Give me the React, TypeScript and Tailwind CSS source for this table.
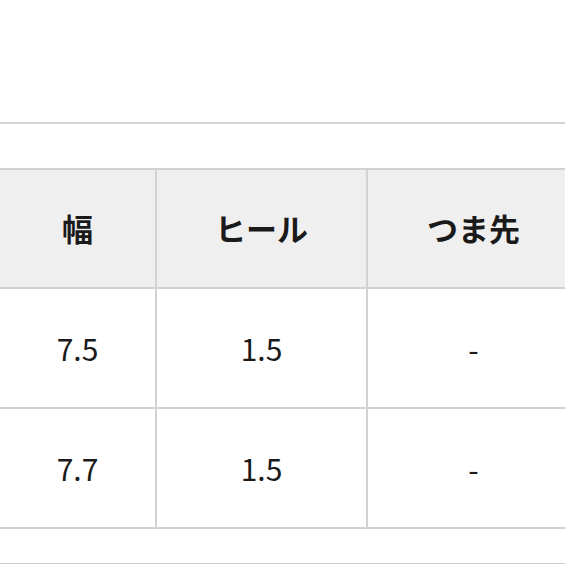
import React from 'react';

const rows = [
  ['7.5', '1.5', '-'],
  ['7.7', '1.5', '-'],
];

const App: React.FC = () => {
  return (
    <div
      className="w-[565px] h-[565px] overflow-hidden bg-white text-[#1a1a1a]"
      style={{ fontFamily: '"Noto Sans CJK JP", "Noto Sans", sans-serif' }}
    >
      <div className="h-[122px]"></div>
      <div className="h-[2px] bg-[#d4d4d4]"></div>
      <div className="h-[44px]"></div>

      {/* size table */}
      <table className="border-collapse table-fixed w-[580px]">
        <colgroup>
          <col className="w-[156px]" />
          <col className="w-[211px]" />
          <col className="w-[213px]" />
        </colgroup>
        <thead>
          <tr className="h-[119px] bg-[#efefef]">
            {['幅', 'ヒール', 'つま先'].map((h, i) => (
              <th
                key={i}
                className="border-2 border-[#d2d2d2] border-l-0 text-[31px] font-semibold text-center align-middle p-0"
              >
                {h}
              </th>
            ))}
          </tr>
        </thead>
        <tbody>
          {rows.map((r, i) => (
            <tr key={i} className="h-[120px]">
              {r.map((c, j) => (
                <td
                  key={j}
                  className="border-2 border-[#d2d2d2] border-l-0 text-[30px] font-normal text-center align-middle p-0"
                >
                  {c}
                </td>
              ))}
            </tr>
          ))}
        </tbody>
      </table>

      <div className="h-[34px]"></div>
      <div className="h-px bg-[#cfcfcf]"></div>
    </div>
  );
};

export default App;
